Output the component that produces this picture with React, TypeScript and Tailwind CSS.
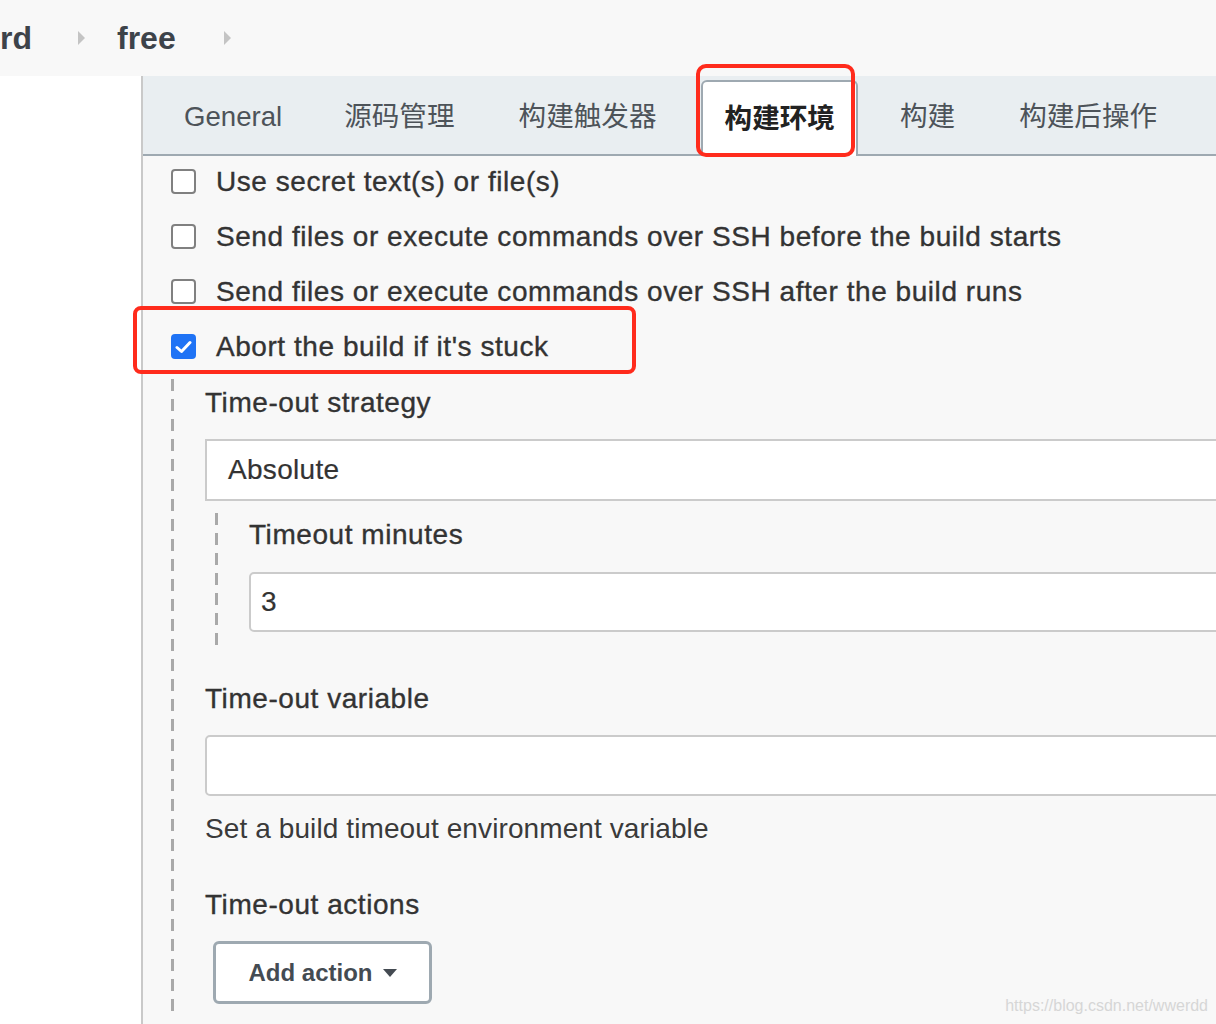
import React from "react";

const Caret = () => (
  <svg width="7" height="14" viewBox="0 0 7 14" className="shrink-0">
    <path d="M0 0 L7 7 L0 14 Z" fill="#c4c4c4" />
  </svg>
);

const Checkbox = ({ checked }: { checked?: boolean }) =>
  checked ? (
    <div className="w-[25px] h-[25px] rounded-[4px] bg-[#1f73f5] flex items-center justify-center shrink-0">
      <svg width="17" height="14" viewBox="0 0 17 14">
        <path d="M2 7.5 L6.5 11.5 L15 2.5" stroke="#fff" strokeWidth="3" fill="none" strokeLinecap="round" strokeLinejoin="round" />
      </svg>
    </div>
  ) : (
    <div className="w-[25px] h-[25px] rounded-[4px] border-2 border-[#808080] bg-white shrink-0" />
  );

const tabs = ["General", "源码管理", "构建触发器", "构建环境", "构建", "构建后操作"];

const dashed =
  "bg-[repeating-linear-gradient(to_bottom,#a9a9a9_0px,#a9a9a9_12px,transparent_12px,transparent_20px)]";

export default function App() {
  return (
    <div className="relative w-[1216px] h-[1024px] overflow-hidden bg-[#f8f8f8] font-['Liberation_Sans','Noto_Sans_CJK_SC',sans-serif] text-[#333]">
      {/* Breadcrumb header */}
      <div className="h-[76px] flex items-center">
        <div className="flex items-center text-[32px] font-bold text-[#3d434a] pb-[1px]">
          <span>rd</span>
          <span className="ml-[46px]"><Caret /></span>
          <span className="ml-[32px]">free</span>
          <span className="ml-[48px]"><Caret /></span>
        </div>
      </div>

      <div className="flex h-[948px]">
        <div className="w-[141px] bg-white shrink-0" />
        <div className="w-[2px] bg-[#c9c9c9] shrink-0" />
        <div className="flex-1 min-w-0">
          {/* Tab bar */}
          <div className="h-[80px] bg-[#e9eef1] border-b-2 border-[#9ea9b1] flex items-end pl-[9px]">
            {tabs.map((t, i) =>
              i === 3 ? (
                <div
                  key={t}
                  className="ml-[12px] mr-[10px] pl-[22px] pr-[21px] h-[76px] -mb-[2px] bg-white border-2 border-b-0 border-[#9ea9b1] rounded-t-[6px] flex items-center text-[27.6px] font-bold text-[#222]"
                >
                  {t}
                </div>
              ) : (
                <div
                  key={t}
                  className={`${i === 1 ? "ml-[8px]" : "ml-[10px]"} mr-[10px] px-[22px] h-[78px] flex items-center text-[27.6px] text-[#4d5359] pt-[4px]`}
                >
                  {t}
                </div>
              )
            )}
          </div>

          {/* Content */}
          <div className="pl-[28px] text-[28px] tracking-[0.55px] [-webkit-text-stroke:0.35px]">
            <div className="h-[55px] mt-[-2px] flex items-center gap-[20px]">
              <Checkbox />
              <span>Use secret text(s) or file(s)</span>
            </div>
            <div className="h-[55px] flex items-center gap-[20px]">
              <Checkbox />
              <span>Send files or execute commands over SSH before the build starts</span>
            </div>
            <div className="h-[55px] flex items-center gap-[20px]">
              <Checkbox />
              <span>Send files or execute commands over SSH after the build runs</span>
            </div>
            <div className="h-[55px] flex items-center gap-[20px]">
              <Checkbox checked />
              <span>Abort the build if it's stuck</span>
            </div>

            {/* Nested section */}
            <div className="mt-[5px] flex">
              <div className={`w-[3px] h-[640px] shrink-0 ${dashed}`} />
              <div className="pl-[31px] flex-1">
                <div className="h-[48px] flex items-center">Time-out strategy</div>
                <div className="mt-[12px] h-[62px] w-[1040px] bg-white border-2 border-[#cbcbcb] flex items-center pl-[21px] tracking-[0.3px] [-webkit-text-stroke:0.2px]">
                  Absolute
                </div>
                <div className="mt-[12px] ml-[10px] flex">
                  <div className={`w-[3px] h-[133px] shrink-0 ${dashed}`} />
                  <div className="pl-[31px]">
                    <div className="h-[44px] flex items-center">Timeout minutes</div>
                    <div className="mt-[15px] h-[60px] w-[1000px] bg-white border-2 border-[#cbcbcb] rounded-[5px] flex items-center pl-[10px] [-webkit-text-stroke:0.2px]">
                      3
                    </div>
                  </div>
                </div>
                <div className="mt-[29px] h-[48px] flex items-center">Time-out variable</div>
                <div className="mt-[12px] h-[61px] w-[1040px] bg-white border-2 border-[#cbcbcb] rounded-[5px]" />
                <div className="mt-[9px] h-[48px] flex items-center text-[#3a3a3a] tracking-[0.1px] [-webkit-text-stroke:0px]">
                  Set a build timeout environment variable
                </div>
                <div className="mt-[28px] h-[48px] flex items-center">Time-out actions</div>
                <div className="mt-[12px] ml-[8px] h-[63px] w-[219px] bg-white border-[3px] border-[#9ea9b1] rounded-[6px] flex items-center justify-center gap-[10px] font-bold text-[24px] tracking-normal [-webkit-text-stroke:0px] text-[#444b52]">
                  <span>Add action</span>
                  <svg width="14" height="8" viewBox="0 0 14 8">
                    <path d="M0 0 L14 0 L7 8 Z" fill="#444b52" />
                  </svg>
                </div>
              </div>
            </div>
          </div>
        </div>
      </div>

      {/* Red annotation boxes */}
      <div className="absolute left-[696px] top-[64px] w-[159px] h-[93px] border-[4px] border-[#ff2b1c] rounded-[10px] pointer-events-none" />
      <div className="absolute left-[133px] top-[306px] w-[503px] h-[68px] border-[4px] border-[#ff2b1c] rounded-[8px] pointer-events-none" />

      {/* Watermark */}
      <div className="absolute right-[8px] bottom-[6px] text-[16px] text-[#d6d6d6]">https://blog.csdn.net/wwerdd</div>
    </div>
  );
}
